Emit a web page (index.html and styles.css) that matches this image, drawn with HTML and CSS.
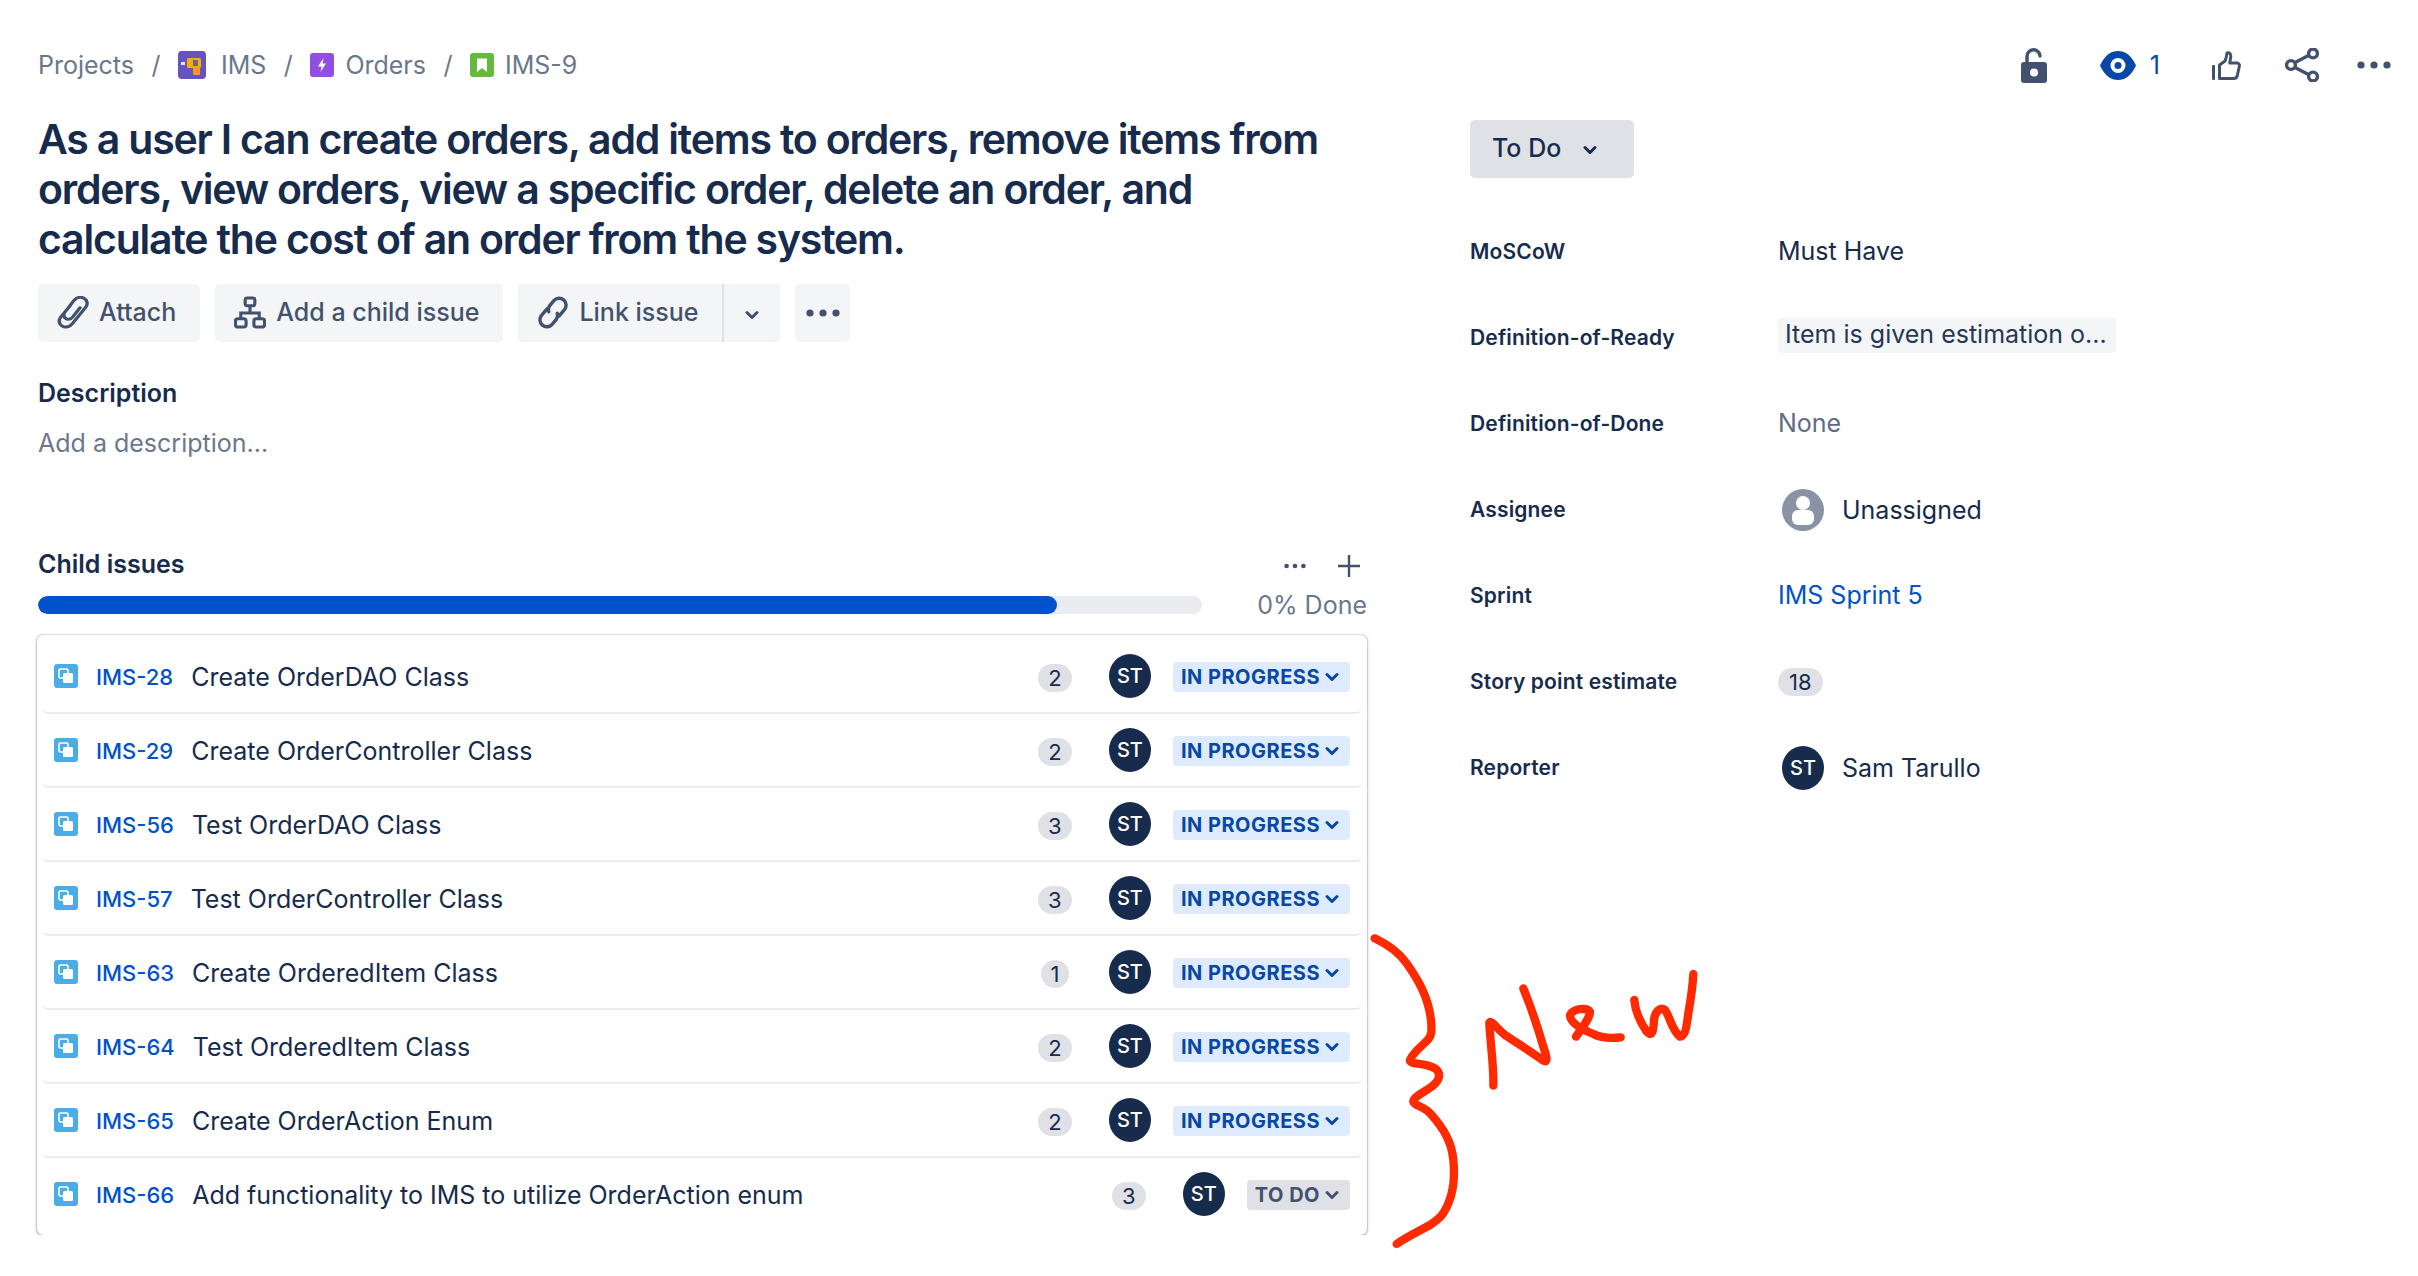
FILE: index.html
```html
<!DOCTYPE html>
<html lang="en">
  <head>
    <meta charset="utf-8" />
    <title>IMS-9</title>
    <link rel="stylesheet" href="styles.css">
  </head>

  <body>
    <!-- shared icons -->
    <svg class="sprite" width="0" height="0">
      <symbol id="subtask" viewBox="0 0 24 24">
        <rect width="24" height="24" rx="3" fill="#4BADE8"/>
        <rect x="5" y="5" width="9" height="9" rx="1.5" fill="none" stroke="#fff" stroke-width="1.6"/>
        <rect x="9" y="9" width="10" height="10" rx="1.5" fill="#fff"/>
      </symbol>
      <symbol id="chevron" viewBox="0 0 14 10">
        <path d="M2 2.5 L7 7.5 L12 2.5" fill="none" stroke="currentColor" stroke-width="3" stroke-linecap="round" stroke-linejoin="round"/>
      </symbol>
      <symbol id="dots" viewBox="0 0 34 8">
        <circle cx="4" cy="4" r="3.6" fill="currentColor"/>
        <circle cx="17" cy="4" r="3.6" fill="currentColor"/>
        <circle cx="30" cy="4" r="3.6" fill="currentColor"/>
      </symbol>
    </svg>

    <div class="page">
      <header class="topbar">
        <nav class="crumbs">
          <span>Projects</span>
          <span class="slash">/</span>
          <svg class="crumb-icon ims" viewBox="0 0 28 28">
            <rect width="28" height="28" rx="4" fill="#6554C0"/>
            <rect x="3" y="11" width="4" height="3" fill="#DEEBFF"/>
            <rect x="9" y="7" width="14" height="10" rx="1.5" fill="#FFAB00"/>
            <rect x="15" y="15" width="7" height="9" rx="1.5" fill="#FF991F"/>
            <rect x="15" y="9" width="5" height="6" fill="#5E6C84"/>
          </svg>
          <span>IMS</span>
          <span class="slash">/</span>
          <svg class="crumb-icon" viewBox="0 0 24 24">
            <rect width="24" height="24" rx="3" fill="#904EE2"/>
            <path d="M13.5 5 L8 13.5 H11.5 L10.5 19 L16 10.5 H12.5 Z" fill="#fff"/>
          </svg>
          <span class="tight">Orders</span>
          <span class="slash">/</span>
          <svg class="crumb-icon" viewBox="0 0 24 24">
            <rect width="24" height="24" rx="3" fill="#63BA3C"/>
            <path d="M7 5.5 H17 V19 L12 15 L7 19 Z" fill="#fff"/>
          </svg>
          <span class="tight">IMS-9</span>
        </nav>
        <div class="actions">
          <svg class="act-lock" viewBox="0 0 26 35">
            <path d="M6 15 V8.5 a6.5 6.5 0 0 1 13 -0.5" fill="none" stroke="#42526E" stroke-width="3.4" stroke-linecap="round"/>
            <rect y="14" width="26" height="21" rx="3" fill="#42526E"/>
            <circle cx="13" cy="24.5" r="4" fill="#fff"/>
          </svg>
          <div class="watch">
            <svg class="act-eye" viewBox="0 0 36 29">
              <path d="M0 14.5 C5 4 11 0 18 0 C25 0 31 4 36 14.5 C31 25 25 29 18 29 C11 29 5 25 0 14.5 Z" fill="#0747A6"/>
              <circle cx="18" cy="14.5" r="7.5" fill="#fff"/>
              <circle cx="18" cy="14.5" r="3.5" fill="#0747A6"/>
            </svg>
            <span>1</span>
          </div>
          <svg class="act-thumb" viewBox="0 0 29 29">
            <rect y="14" width="3" height="15" rx="1" fill="#42526E"/>
            <path d="M7.5 27.5 V14 L13 10 C14.5 7 14.5 4 15 2.4 C15.6 1 18.8 1.5 18.8 5 C18.8 8 17.8 10 17.8 12 H25 C27 12 27.8 14 27.3 15.5 L25.2 25 C24.7 26.6 23.7 27.5 22 27.5 Z" fill="none" stroke="#42526E" stroke-width="3" stroke-linejoin="round"/>
          </svg>
          <svg class="act-share" viewBox="0 0 34 34">
            <g fill="none" stroke="#42526E" stroke-width="3.4">
              <path d="M10 14.5 L23.5 7.5 M10 19.5 L23.5 26.5"/>
              <circle cx="28" cy="5.5" r="4.4"/>
              <circle cx="6" cy="17" r="4.4"/>
              <circle cx="28" cy="28.5" r="4.4"/>
            </g>
          </svg>
          <svg class="act-dots"><use href="#dots"/></svg>
        </div>
      </header>

      <div class="columns">
        <main class="issue">
          <h1>As a user I can create orders, add items to orders, remove items from orders, view orders, view a specific order, delete an order, and calculate the cost of an order from the system.</h1>

          <div class="toolbar">
            <button class="btn">
              <svg class="btn-icon" viewBox="3 1 27 31" preserveAspectRatio="none">
                <path d="M14.5 9.5 L6 21 C3.5 25 5.5 29 9 30 C12 30.8 14.5 29 16 27 L27 12 C29.5 8.5 28.5 4.5 25.5 3 C22.5 1.5 19.5 2.5 17.5 5 L9.5 16.5 C8 19 9 21.5 11 22.5 C13 23.3 15 22.5 16 21 L22.5 12" fill="none" stroke="#42526E" stroke-width="2.8" stroke-linecap="round"/>
              </svg>
              Attach
            </button>
            <button class="btn">
              <svg class="btn-icon" viewBox="0 0 33 33">
                <g fill="none" stroke="#42526E" stroke-width="3.2">
                  <rect x="11.5" y="1.5" width="10" height="8" rx="2"/>
                  <path d="M16.5 9.5 V17 M7 23 V17 H26 V23"/>
                  <rect x="1.5" y="23" width="11" height="8.5" rx="2.5"/>
                  <rect x="20.5" y="23" width="11" height="8.5" rx="2.5"/>
                </g>
              </svg>
              Add a child issue
            </button>
            <div class="btn-split">
              <button class="btn btn-main">
                <svg class="btn-icon" viewBox="1 1 30 30">
                  <g transform="rotate(-50 16 16)" fill="none" stroke="#42526E" stroke-width="3.2" stroke-linecap="round">
                    <path d="M15 9.5 H7 a6.5 6.5 0 0 0 0 13 H13 a6.5 6.5 0 0 0 5 -3"/>
                    <path d="M17 22.5 H25 a6.5 6.5 0 0 0 0 -13 H19 a6.5 6.5 0 0 0 -5 3"/>
                  </g>
                </svg>
                Link issue
              </button>
              <button class="btn btn-caret"><svg class="caret"><use href="#chevron"/></svg></button>
            </div>
            <button class="btn btn-more"><svg class="more-dots"><use href="#dots"/></svg></button>
          </div>

          <h2 class="desc-title">Description</h2>
          <p class="desc-empty">Add a description...</p>

          <div class="child-head">
            <h2>Child issues</h2>
            <div class="child-tools">
              <svg class="tool-dots"><use href="#dots"/></svg>
              <svg class="tool-plus" viewBox="0 0 22 22"><path d="M11 0.5 V21.5 M0.5 11 H21.5" stroke="#42526E" stroke-width="2.4" stroke-linecap="round"/></svg>
            </div>
          </div>
          <div class="progress-row">
            <div class="track"><div class="fill" style="width: 87.5%"></div></div>
            <span class="done">0% Done</span>
          </div>

          <div class="child-list">
            <div class="row">
              <svg class="row-icon"><use href="#subtask"/></svg>
              <a class="key">IMS-28</a><span class="summary">Create OrderDAO Class</span>
              <span class="slot"><span class="pill">2</span></span>
              <span class="avatar">ST</span>
              <span class="status progress">IN PROGRESS<svg class="status-caret"><use href="#chevron"/></svg></span>
            </div>
            <div class="row">
              <svg class="row-icon"><use href="#subtask"/></svg>
              <a class="key">IMS-29</a><span class="summary">Create OrderController Class</span>
              <span class="slot"><span class="pill">2</span></span>
              <span class="avatar">ST</span>
              <span class="status progress">IN PROGRESS<svg class="status-caret"><use href="#chevron"/></svg></span>
            </div>
            <div class="row">
              <svg class="row-icon"><use href="#subtask"/></svg>
              <a class="key">IMS-56</a><span class="summary">Test OrderDAO Class</span>
              <span class="slot"><span class="pill">3</span></span>
              <span class="avatar">ST</span>
              <span class="status progress">IN PROGRESS<svg class="status-caret"><use href="#chevron"/></svg></span>
            </div>
            <div class="row">
              <svg class="row-icon"><use href="#subtask"/></svg>
              <a class="key">IMS-57</a><span class="summary">Test OrderController Class</span>
              <span class="slot"><span class="pill">3</span></span>
              <span class="avatar">ST</span>
              <span class="status progress">IN PROGRESS<svg class="status-caret"><use href="#chevron"/></svg></span>
            </div>
            <div class="row">
              <svg class="row-icon"><use href="#subtask"/></svg>
              <a class="key">IMS-63</a><span class="summary">Create OrderedItem Class</span>
              <span class="slot"><span class="pill pill-one">1</span></span>
              <span class="avatar">ST</span>
              <span class="status progress">IN PROGRESS<svg class="status-caret"><use href="#chevron"/></svg></span>
            </div>
            <div class="row">
              <svg class="row-icon"><use href="#subtask"/></svg>
              <a class="key">IMS-64</a><span class="summary">Test OrderedItem Class</span>
              <span class="slot"><span class="pill">2</span></span>
              <span class="avatar">ST</span>
              <span class="status progress">IN PROGRESS<svg class="status-caret"><use href="#chevron"/></svg></span>
            </div>
            <div class="row">
              <svg class="row-icon"><use href="#subtask"/></svg>
              <a class="key">IMS-65</a><span class="summary">Create OrderAction Enum</span>
              <span class="slot"><span class="pill">2</span></span>
              <span class="avatar">ST</span>
              <span class="status progress">IN PROGRESS<svg class="status-caret"><use href="#chevron"/></svg></span>
            </div>
            <div class="row">
              <svg class="row-icon"><use href="#subtask"/></svg>
              <a class="key">IMS-66</a><span class="summary">Add functionality to IMS to utilize OrderAction enum</span>
              <span class="slot"><span class="pill">3</span></span>
              <span class="avatar">ST</span>
              <span class="status todo">TO DO<svg class="status-caret"><use href="#chevron"/></svg></span>
            </div>
          </div>
        </main>

        <aside class="side">
          <button class="status-btn">To Do<svg class="caret"><use href="#chevron"/></svg></button>
          <dl class="fields">
            <dt>MoSCoW</dt>
            <dd>Must Have</dd>
            <dt>Definition-of-Ready</dt>
            <dd><span class="ready">Item is given estimation o...</span></dd>
            <dt>Definition-of-Done</dt>
            <dd class="muted">None</dd>
            <dt>Assignee</dt>
            <dd class="person">
              <svg class="user-blank" viewBox="0 0 42 42">
                <circle cx="21" cy="21" r="21" fill="#8993A4"/>
                <circle cx="21" cy="14" r="7" fill="#fff"/>
                <rect x="10" y="21" width="22" height="15" rx="6" fill="#fff"/>
              </svg>
              Unassigned
            </dd>
            <dt>Sprint</dt>
            <dd><a class="sprint">IMS Sprint 5</a></dd>
            <dt>Story point estimate</dt>
            <dd><span class="pill points">18</span></dd>
            <dt>Reporter</dt>
            <dd class="person"><span class="avatar">ST</span>Sam Tarullo</dd>
          </dl>
        </aside>
      </div>
    </div>

    <!-- red pen annotation drawn on top of the screenshot -->
    <svg class="scribble" viewBox="0 0 1080 1020">
      <g fill="none" stroke="#FF2A00" stroke-width="25" stroke-linecap="round" stroke-linejoin="round">
        <path d="M44 55 C80 72 115 95 140 130 C175 180 205 230 213 300 C216 335 215 345 205 358 C190 375 160 395 150 420 C148 435 190 425 225 445 C245 460 240 480 215 500 C190 518 160 530 160 545 C165 560 190 555 215 585 C250 625 275 665 280 720 C285 770 282 810 265 850 C250 885 240 895 210 915 C180 932 140 950 110 972"/>
        <path d="M400 497 C402 440 390 360 388 308 C395 300 410 325 435 345 C480 375 520 400 550 422 C565 430 560 410 550 380 C530 310 510 255 490 205"/>
        <path d="M648 350 C665 325 690 295 690 275 C680 262 640 265 630 285 C630 310 670 330 700 342 C725 355 755 355 782 352"/>
        <path d="M823 240 C825 270 840 305 860 335 C875 350 880 340 882 300 C885 275 900 260 915 270 C930 290 935 330 960 350 C975 350 980 320 985 280 C992 240 998 200 1000 162"/>
      </g>
    </svg>
  </body>
</html>
```

FILE: styles.css
```css
body {
  margin: 0;
  background-color: #fff;
  color: #172B4D;
  font-family: Inter, "Liberation Sans", sans-serif;
  font-size: 25px;
}
h1, h2, p, dl, dd {
  margin: 0;
}
button {
  font-family: inherit;
  border: none;
  cursor: pointer;
}
.sprite {
  display: block;
}
.page {
  padding: 40px 27px 0 38px;
}

/* top bar */
.topbar {
  display: flex;
  justify-content: space-between;
  align-items: center;
  height: 50px;
}
.crumbs {
  display: flex;
  align-items: center;
  color: #6B778C;
  gap: 15px;
}
.crumbs .slash {
  margin: 0 2.5px;
}
.crumbs .tight {
  margin-left: -4px;
}
.crumb-icon {
  width: 24px;
  height: 24px;
}
.crumb-icon.ims {
  width: 28px;
  height: 28px;
}
.actions {
  display: flex;
  align-items: center;
  color: #42526E;
}
.act-lock {
  width: 26px;
  height: 35px;
}
.watch {
  display: flex;
  align-items: center;
  gap: 14px;
  margin-left: 53px;
  color: #0747A6;
}
.act-eye {
  width: 36px;
  height: 29px;
}
.act-thumb {
  width: 29px;
  height: 29px;
  margin-left: 52px;
}
.act-share {
  width: 34px;
  height: 34px;
  margin-left: 44px;
}
.act-dots {
  width: 34px;
  height: 8px;
  margin-left: 38px;
}

/* columns */
.columns {
  display: flex;
  gap: 102px;
  margin-top: 24px;
}
.issue {
  width: 1330px;
  flex: none;
}
.side {
  flex: 1;
  padding-top: 6px;
}
h1 {
  font-size: 41px;
  line-height: 50px;
  font-weight: 600;
  letter-spacing: -1.2px;
  width: 1300px;
}

/* toolbar */
.toolbar {
  display: flex;
  gap: 15px;
  margin-top: 20px;
}
.btn {
  display: flex;
  align-items: center;
  gap: 10px;
  height: 58px;
  padding: 0 24px 2px 19px;
  background-color: #F4F5F7;
  color: #42526E;
  border-radius: 5px;
  font-size: 25px;
  font-weight: 500;
}
.btn-icon {
  width: 32px;
  height: 33px;
}
.btn-split {
  display: flex;
  gap: 2px;
  background-color: #DFE1E6;
  border-radius: 5px;
}
.btn-main {
  border-radius: 5px 0 0 5px;
}
.btn-caret {
  width: 56px;
  padding: 4px 0 0;
  justify-content: center;
  border-radius: 0 5px 5px 0;
}
.caret {
  width: 14px;
  height: 10px;
}
.btn-more {
  width: 55px;
  padding: 0;
  justify-content: center;
}
.more-dots {
  width: 34px;
  height: 8px;
}

/* description */
h2 {
  font-size: 25px;
  line-height: 30px;
  font-weight: 600;
}
.desc-title {
  margin-top: 36px;
}
.desc-empty {
  margin-top: 20px;
  line-height: 30px;
  color: #6B778C;
}

/* child issues */
.child-head {
  display: flex;
  justify-content: space-between;
  align-items: center;
  margin-top: 91px;
  padding-right: 8px;
}
.child-tools {
  display: flex;
  align-items: center;
  gap: 32px;
  margin-top: 4px;
  color: #42526E;
}
.tool-dots {
  width: 22px;
  height: 6px;
}
.tool-plus {
  width: 22px;
  height: 22px;
}
.progress-row {
  display: flex;
  align-items: center;
  justify-content: space-between;
  height: 34px;
  margin-top: 9px;
}
.track {
  width: 1164px;
  height: 18px;
  background-color: #EBECF0;
  border-radius: 9px;
  overflow: hidden;
}
.fill {
  height: 100%;
  background-color: #0052CC;
  border-radius: 9px;
}
.done {
  color: #6B778C;
  margin-right: 1px;
}
.child-list {
  margin-top: 13px;
  padding-top: 5px;
  padding-bottom: 3px;
  width: 1330px;
  box-sizing: border-box;
  margin-left: -1px;
  border-radius: 6px;
  box-shadow: 0 1px 3px rgba(9, 30, 66, 0.4), 0 0 2px rgba(9, 30, 66, 0.35);
}
.row {
  display: flex;
  align-items: center;
  height: 74px;
  box-sizing: border-box;
  margin: 0 5px;
  padding: 0 12px;
  border-bottom: 2px solid #EBECF0;
  border-radius: 6px;
}
.row:last-child {
  border-bottom-color: transparent;
}
.row-icon {
  width: 24px;
  height: 24px;
  flex: none;
}
.key {
  margin-left: 18px;
  margin-top: 2px;
  color: #0052CC;
  font-size: 22px;
  font-weight: 500;
}
.summary {
  flex: 1;
  margin-left: 18px;
  margin-top: 2px;
}
.slot {
  display: flex;
  justify-content: center;
  width: 36px;
  margin-right: 36px;
  margin-top: 4px;
}
.pill {
  display: inline-block;
  min-width: 14px;
  padding: 0 10px;
  height: 28px;
  line-height: 28px;
  text-align: center;
  background-color: #DFE1E6;
  border-radius: 14px;
  font-size: 22px;
}
.pill-one {
  padding: 0 7px;
}
.avatar {
  display: flex;
  align-items: center;
  justify-content: center;
  flex: none;
  width: 42px;
  height: 44px;
  border-radius: 50%;
  background-color: #172B4D;
  color: #fff;
  font-size: 20px;
  font-weight: 500;
}
.status {
  display: flex;
  align-items: center;
  gap: 5px;
  margin-left: 22px;
  margin-top: 2px;
  height: 30px;
  padding: 0 11px 0 8px;
  border-radius: 4px;
  font-size: 20px;
  font-weight: 700;
  letter-spacing: 0.5px;
}
.status.progress {
  background-color: #DEEBFF;
  color: #0747A6;
}
.status.todo {
  background-color: #DFE1E6;
  color: #42526E;
}
.status-caret {
  width: 14px;
  height: 10px;
}

/* right side */
.status-btn {
  display: flex;
  align-items: center;
  gap: 22px;
  width: 164px;
  height: 58px;
  padding: 0 0 2px 22px;
  background-color: #DFE1E6;
  border-radius: 5px;
  color: #172B4D;
  font-size: 25px;
  font-weight: 500;
}
.status-btn .caret {
  margin-top: 3px;
}
.fields {
  display: grid;
  grid-template-columns: 308px 1fr;
  grid-auto-rows: 86px;
  align-items: center;
  margin-top: 30px;
}
.fields dt {
  font-size: 21px;
  font-weight: 600;
  letter-spacing: 0.15px;
}
.ready {
  display: inline-block;
  width: 331px;
  height: 35px;
  line-height: 33px;
  padding-left: 7px;
  background-color: #F4F5F7;
  border-radius: 4px;
  color: #253858;
  margin-top: -4px;
  vertical-align: top;
}
.muted {
  color: #5E6C84;
}
.person {
  display: flex;
  align-items: center;
  gap: 18px;
  padding-left: 4px;
  margin-top: 2px;
}
.user-blank {
  width: 42px;
  height: 42px;
}
.sprint {
  color: #0052CC;
}
.points {
  padding: 0 11px;
}

/* pen annotation */
.scribble {
  position: absolute;
  left: 1360px;
  top: 920px;
  width: 360px;
  height: 340px;
}
```
